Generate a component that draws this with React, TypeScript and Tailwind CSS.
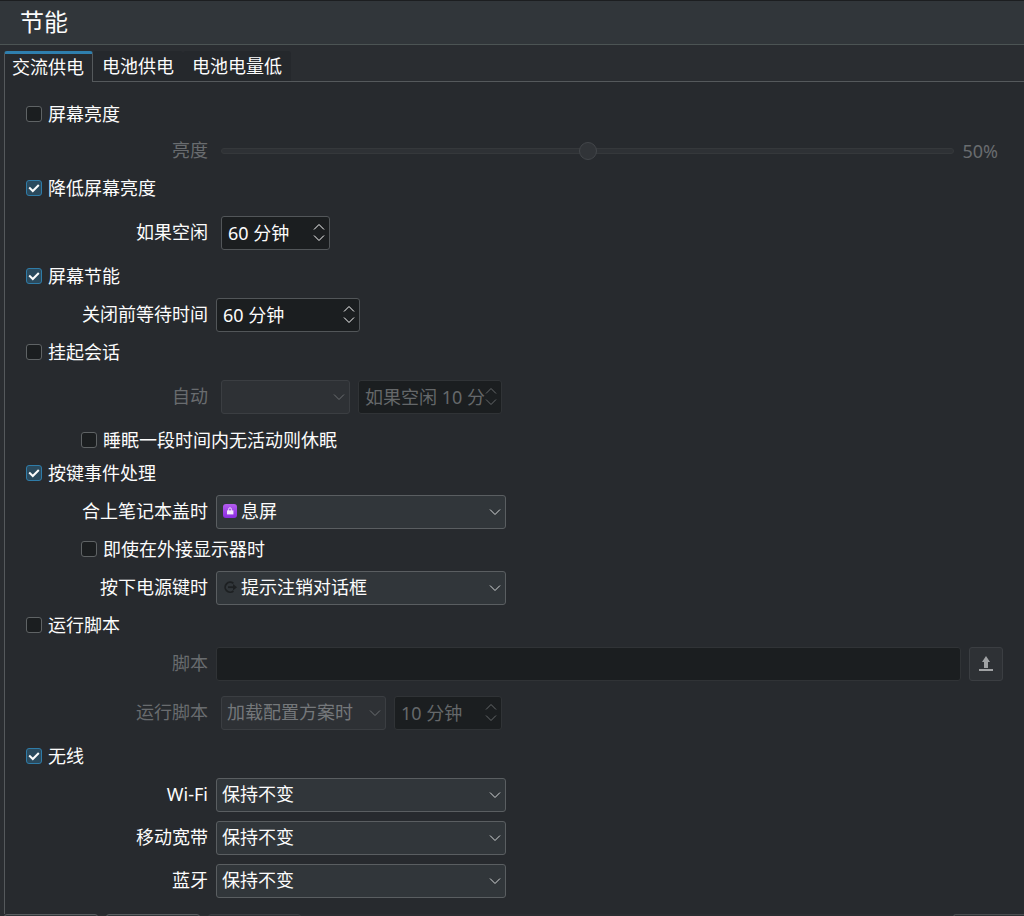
import { useState } from "react";
import type { ReactNode } from "react";
import clsx from "clsx";

function CheckRow(props: { label: string, checked?: boolean, className?: string }) {
    const [checked, setChecked] = useState(props.checked ?? false);

    return (
        <label className={clsx("flex w-fit items-center gap-1.5 h-6", props.className)}>
            <span className="relative flex">
                <input
                    type="checkbox"
                    checked={checked}
                    onChange={(e) => setChecked(e.target.checked)}
                    className="appearance-none size-4 rounded-[3px] border border-[#5f6365] bg-[#1b1e20] checked:border-[#2f7ca8] checked:bg-[#2b4a5d]"
                />
                {checked && (
                    <svg viewBox="0 0 16 16" className="absolute inset-0 size-4 pointer-events-none" fill="none" stroke="#fcfcfc" strokeWidth="2">
                        <path d="M3.2 7.6 L6.8 11 L12.8 5" />
                    </svg>
                )}
            </span>
            {props.label}
        </label>
    );
}

function Field(props: { id: string, label: string, disabled?: boolean, inset?: boolean, className?: string, children: ReactNode }) {
    return (
        <div className={clsx("flex items-center", props.className)}>
            <label
                htmlFor={props.id}
                className={clsx("w-[203px] shrink-0 pb-0.5 text-right", props.inset ? "mr-[13px]" : "mr-2", props.disabled && "text-[#696c6f]")}
            >
                {props.label}
            </label>
            {props.children}
        </div>
    );
}

function Combo(props: { id: string, options: string[], disabled?: boolean, icon?: ReactNode, label?: string, className: string }) {
    return (
        <div className={clsx("relative", props.className)}>
            <select
                id={props.id}
                aria-label={props.label}
                disabled={props.disabled}
                className={clsx(
                    "appearance-none block w-full h-[34px] rounded-[3px] border pr-6 pb-0.5 opacity-100",
                    props.icon ? "pl-6" : "pl-[5px]",
                    props.disabled ? "border-[#3b3e42] bg-[#2e3135] text-[#75787b]" : "border-[#5a5e61] bg-[#31363a] text-[#fcfcfc]"
                )}
            >
                {props.options.map((option) => <option key={option}>{option}</option>)}
            </select>
            {props.icon && <span className="absolute left-[7px] top-[9px] pointer-events-none">{props.icon}</span>}
            <svg
                viewBox="0 0 12 8"
                className={clsx("absolute right-[5px] top-[13px] w-3 h-2 pointer-events-none", props.disabled ? "text-[#6b6e71]" : "text-[#d4d6d7]")}
                fill="none"
                stroke="currentColor"
            >
                <path d="M1 1.5 L6 6.5 L11 1.5" />
            </svg>
        </div>
    );
}

function Spin(props: { id: string, value: string, disabled?: boolean, label?: string, className: string }) {
    return (
        <div className={clsx("relative", props.className, props.disabled ? "text-[#65686a]" : "text-[#fcfcfc]")}>
            <input
                id={props.id}
                type="text"
                aria-label={props.label}
                defaultValue={props.value}
                disabled={props.disabled}
                className={clsx(
                    "block w-full h-[34px] rounded-[3px] border bg-[#1b1e20] pl-[6px] pr-4 pb-[3px]",
                    props.disabled ? "border-[#303336]" : "border-[#525659]"
                )}
            />
            <span className="absolute right-1 top-[7px] flex flex-col gap-[3px]">
                <button type="button" aria-label="增加" disabled={props.disabled} className="block">
                    <svg viewBox="0 0 14 8" className="block w-3.5 h-2" fill="none" stroke="currentColor">
                        <path d="M2 6.5 L7 1.5 L12 6.5" />
                    </svg>
                </button>
                <button type="button" aria-label="减少" disabled={props.disabled} className="block">
                    <svg viewBox="0 0 14 8" className="block w-3.5 h-2" fill="none" stroke="currentColor">
                        <path d="M2 1.5 L7 6.5 L12 1.5" />
                    </svg>
                </button>
            </span>
        </div>
    );
}

function LockIcon() {
    return (
        <svg viewBox="0 0 14 14" className="size-3.5">
            <defs>
                <linearGradient id="lockFill" x1="0" y1="0" x2="0" y2="1">
                    <stop offset="0" stopColor="#b45cf0" />
                    <stop offset="1" stopColor="#8a2ce0" />
                </linearGradient>
            </defs>
            <rect width="14" height="14" rx="3" fill="url(#lockFill)" />
            <path d="M5.6 7 V5.2 a1.4 1.4 0 0 1 2.8 0 V7" fill="none" stroke="#ead8fa" />
            <rect x="4" y="6.4" width="6.4" height="4" fill="#f3e8fc" />
        </svg>
    );
}

function LogoutIcon() {
    return (
        <svg viewBox="0 0 14 14" className="size-3.5" fill="none" stroke="#1d2022" strokeWidth="1.8">
            <path d="M10.4 3.4 A5 5 0 1 0 10.4 11" />
            <path d="M5 7.2 H11" />
            <path d="M10 4 L14 7.2 L10 10.4 Z" fill="#1d2022" stroke="none" />
        </svg>
    );
}

const tabs = ["交流供电", "电池供电", "电池电量低"];

export default function App() {
    const [activeTab, setActiveTab] = useState(tabs[0]);

    return (
        <div className="flex h-screen flex-col overflow-hidden bg-[#2a2d31] text-lg leading-6 text-[#fcfcfc] font-['Noto_Sans','Noto_Sans_CJK_SC',sans-serif]">
            <header className="flex h-[45px] shrink-0 items-center border-t border-b border-t-[#1c1e20] border-b-[#4c5454] bg-[#31363a] pb-px pl-5">
                <h1 className="text-2xl">节能</h1>
            </header>

            <div role="tablist" className="flex shrink-0 pt-1.5 pl-1">
                {tabs.map((tab) => (
                    <button
                        key={tab}
                        type="button"
                        role="tab"
                        aria-selected={tab === activeTab}
                        onClick={() => setActiveTab(tab)}
                        className={clsx(
                            "rounded-t-[3px]",
                            tab === activeTab
                                ? "relative z-10 -mb-px h-[31px] border-x border-x-[#55595c] border-t-[3px] border-t-[#2f7fae] bg-[#272a2e] pl-[7px] pr-2 pb-[3px]"
                                : "h-[30px] bg-[#25282c] px-[9px] pb-px"
                        )}
                    >
                        {tab}
                    </button>
                ))}
            </div>

            <main className="shrink-0 ml-1 border-l border-t border-[#55595c] bg-[#272a2e] pr-[21px] pb-4">
                <CheckRow label="屏幕亮度" className="ml-[21px] mt-5" />
                <Field id="brightness" label="亮度" disabled inset className="mt-3">
                    <input
                        id="brightness"
                        type="range"
                        defaultValue={50}
                        disabled
                        className="appearance-none min-w-0 grow h-1.5 rounded-full border border-[#35383b] bg-[#2e3135] [&::-webkit-slider-thumb]:appearance-none [&::-webkit-slider-thumb]:size-[18px] [&::-webkit-slider-thumb]:rounded-full [&::-webkit-slider-thumb]:border [&::-webkit-slider-thumb]:border-[#43464a] [&::-webkit-slider-thumb]:bg-[#313438]"
                    />
                    <output htmlFor="brightness" className="ml-2 mr-[5px] text-[#696c6f]">50%</output>
                </Field>

                <CheckRow label="降低屏幕亮度" checked className="ml-[21px] mt-3" />
                <Field id="dimIdle" label="如果空闲" inset className="mt-4">
                    <Spin id="dimIdle" value="60 分钟" className="w-[109px]" />
                </Field>

                <CheckRow label="屏幕节能" checked className="ml-[21px] mt-3.5" />
                <Field id="screenOff" label="关闭前等待时间" className="mt-2.5">
                    <Spin id="screenOff" value="60 分钟" className="w-36" />
                </Field>

                <CheckRow label="挂起会话" className="ml-[21px] mt-2" />
                <Field id="suspend" label="自动" disabled inset className="mt-4">
                    <Combo id="suspend" options={[""]} disabled className="w-[129px]" />
                    <Spin id="suspendIdle" label="空闲时间" value="如果空闲 10 分钟" disabled className="ml-2 w-36" />
                </Field>
                <CheckRow label="睡眠一段时间内无活动则休眠" className="ml-[76px] mt-3.5" />

                <CheckRow label="按键事件处理" checked className="ml-[21px] mt-[9px]" />
                <Field id="lid" label="合上笔记本盖时" className="mt-2.5">
                    <Combo id="lid" options={["息屏"]} icon={<LockIcon />} className="w-[290px]" />
                </Field>
                <CheckRow label="即使在外接显示器时" className="ml-[76px] mt-2" />
                <Field id="powerKey" label="按下电源键时" className="mt-2.5">
                    <Combo id="powerKey" options={["提示注销对话框"]} icon={<LogoutIcon />} className="w-[290px]" />
                </Field>

                <CheckRow label="运行脚本" className="ml-[21px] mt-2" />
                <Field id="script" label="脚本" disabled className="mt-2.5">
                    <input id="script" type="text" disabled className="min-w-0 grow h-[34px] rounded-[3px] border border-[#303336] bg-[#1b1e20] px-[6px]" />
                    <button type="button" aria-label="选择脚本" disabled className="ml-2 flex size-[34px] shrink-0 items-center justify-center rounded-[3px] border border-[#3b3e42] bg-[#2e3135]">
                        <svg viewBox="0 0 16 16" className="size-4" fill="#a0a2a4">
                            <path d="M8 0 L12 6 H10 V12 H6 V6 H4 Z" />
                            <rect x="1" y="13" width="14" height="2" />
                        </svg>
                    </button>
                </Field>
                <Field id="runWhen" label="运行脚本" disabled inset className="mt-[15px]">
                    <Combo id="runWhen" options={["加载配置方案时"]} disabled className="w-[165px]" />
                    <Spin id="runAfter" label="延迟时间" value="10 分钟" disabled className="ml-2 w-[108px]" />
                </Field>

                <CheckRow label="无线" checked className="ml-[21px] mt-3.5" />
                <Field id="wifi" label="Wi-Fi" className="mt-2.5">
                    <Combo id="wifi" options={["保持不变"]} className="w-[290px]" />
                </Field>
                <Field id="mobile" label="移动宽带" className="mt-[9px]">
                    <Combo id="mobile" options={["保持不变"]} className="w-[290px]" />
                </Field>
                <Field id="bluetooth" label="蓝牙" className="mt-[9px]">
                    <Combo id="bluetooth" options={["保持不变"]} className="w-[290px]" />
                </Field>
            </main>

            <footer className="flex shrink-0 gap-2 pl-1">
                <button type="button" aria-label="帮助" className="h-[34px] w-[94px] rounded-[3px] border border-[#5a5e61] bg-[#31363a]" />
                <button type="button" aria-label="默认" className="h-[34px] w-[94px] rounded-[3px] border border-[#5a5e61] bg-[#31363a]" />
                <button type="button" aria-label="重置" disabled className="h-[34px] w-[93px] rounded-[3px] border border-[#3b3e42] bg-[#2e3135]" />
                <button type="button" aria-label="应用" disabled className="ml-auto h-[34px] w-[71px] rounded-l-[3px] border border-r-0 border-[#4a4d50] bg-[#2e3135]" />
            </footer>
        </div>
    );
}
